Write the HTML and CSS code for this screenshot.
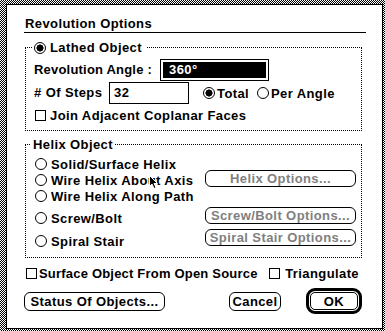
FILE: index.html
```html
<!DOCTYPE html>
<html lang="en">
<head>
    <meta charset="UTF-8">
    <title>Revolution Options</title>
    <link rel="stylesheet" href="styles.css">
</head>
<body>

    <div class="window">
        <h1 class="title">Revolution Options</h1>

        <fieldset class="group lathed">
            <legend><span class="legend-inner"><span class="radio on"></span>Lathed Object</span></legend>
            <div class="row angle-row">
                <span class="label angle-label">Revolution Angle :</span>
                <span class="field angle-field"><span class="selected">360°</span></span>
            </div>
            <div class="row steps-row">
                <span class="label steps-label"># Of Steps</span>
                <span class="field steps-field">32</span>
                <span class="option total"><span class="radio on"></span>Total</span>
                <span class="option per"><span class="radio"></span>Per Angle</span>
            </div>
            <div class="row check-row"><span class="check"></span>Join Adjacent Coplanar Faces</div>
        </fieldset>

        <fieldset class="group helix">
            <legend><span class="legend-inner">Helix Object</span></legend>
            <div class="helix-body">
                <div class="helix-list">
                    <div class="option"><span class="radio"></span>Solid/Surface Helix</div>
                    <div class="option"><span class="radio"></span>Wire Helix About Axis</div>
                    <div class="option"><span class="radio"></span>Wire Helix Along Path</div>
                    <div class="option screw-opt"><span class="radio"></span>Screw/Bolt</div>
                    <div class="option spiral-opt"><span class="radio"></span>Spiral Stair</div>
                </div>
                <div class="helix-buttons">
                    <span class="btn dim helix-btn">Helix Options...</span>
                    <span class="btn dim screw-btn">Screw/Bolt Options...</span>
                    <span class="btn dim spiral-btn">Spiral Stair Options...</span>
                </div>
            </div>
        </fieldset>

        <div class="row surface-row">
            <span class="check surface-check"></span>Surface Object From Open Source
            <span class="tri"><span class="check tri-check"></span>Triangulate</span>
        </div>

        <div class="row button-row">
            <span class="btn status">Status Of Objects...</span>
            <span class="btn cancel">Cancel</span>
            <span class="default"><span class="btn">OK</span></span>
        </div>

        <!-- mouse pointer over the dialog -->
        <svg class="cursor" width="11" height="16" viewBox="0 0 11 16">
            <path d="M1.5 1.5 L1.5 12.5 L4 10 L6 14.5 L8 13.5 L6 9.5 L9.5 9.5 Z" fill="#000" stroke="#fff" stroke-width="1"/>
        </svg>
    </div>

</body>
</html>
```

FILE: styles.css
```css
body {
    margin: 0;
    padding: 4px 0 0 6px;
    height: 331px;
    box-sizing: border-box;
    overflow: hidden;
    background: repeating-conic-gradient(#000 0 25%, #fff 0 50%) 0 0 / 2px 2px;
    font-family: "Liberation Sans", Arial, sans-serif;
    font-weight: bold;
    font-size: 13px;
    letter-spacing: 0.4px;
    color: #000;
}
.window {
    position: relative;
    box-sizing: border-box;
    width: 377px;
    height: 325px;
    border: 1px solid #000;
    background: #fff;
    padding: 11px 16px 0 17px;
}
.title {
    margin: 0;
    padding-left: 1px;
    font-size: 13px;
    line-height: 16px;
    border-bottom: 1px solid #000;
}
.group {
    margin: 6px 4px 0 1px;
    padding: 3px 5px 7px 8px;
    border: 1px dotted #000;
    min-width: 0;
}
.helix {
    margin-top: 5px;
    padding-bottom: 8px;
}
.group legend {
    padding: 0 5px 0 2px;
    margin-left: -2px;
    line-height: 17px;
}
.helix legend {
    margin-left: -3px;
    padding: 0 2px;
}
.legend-inner {
    display: flex;
    align-items: center;
}
.row {
    display: flex;
    align-items: center;
}
.label {
    line-height: 16px;
}
.angle-label {
    width: 126px;
    letter-spacing: 0.2px;
}
.steps-label {
    width: 75px;
}
.field {
    box-sizing: border-box;
    display: flex;
    height: 22px;
    border: 1px solid #000;
    padding: 2px;
    line-height: 16px;
}
.angle-field {
    width: 109px;
}
.selected {
    flex: 1;
    background: #000;
    color: #fff;
    padding-left: 6px;
}
.steps-field {
    width: 80px;
    padding: 2px 4px;
}
.steps-row {
    margin-top: 1px;
}
.check-row {
    margin-top: 3px;
    height: 16px;
}
.option {
    display: flex;
    align-items: center;
    height: 16px;
}
.total {
    width: 54px;
    margin-left: 14px;
}
.total .radio, .per .radio {
    margin-right: 2px;
}
.radio {
    box-sizing: border-box;
    flex: none;
    width: 12px;
    height: 12px;
    border: 1px solid #000;
    border-radius: 50%;
    margin-right: 4px;
}
.radio.on {
    background: radial-gradient(circle, #000 0 3.3px, #fff 3.8px);
}
.helix-list .radio {
    margin-left: 1px;
}
.check {
    box-sizing: border-box;
    flex: none;
    width: 11px;
    height: 11px;
    border: 1px solid #000;
    margin: 0 4px 0 1px;
}
.helix-body {
    display: flex;
}
.helix-list {
    flex: 1;
}
.screw-opt {
    margin-top: 6px;
}
.spiral-opt {
    margin-top: 7px;
}
.helix-buttons {
    display: flex;
    flex-direction: column;
    width: 151px;
}
.btn {
    box-sizing: border-box;
    display: flex;
    align-items: center;
    justify-content: center;
    height: 17px;
    border: 1px solid #000;
    border-radius: 6px;
    background: #fff;
}
.dim {
    color: #808080;
}
.helix-btn {
    margin-top: 14px;
}
.screw-btn {
    margin-top: 20px;
}
.spiral-btn {
    margin-top: 5px;
}
.surface-row {
    margin-top: 7px;
    height: 16px;
    letter-spacing: 0.2px;
}
.surface-check {
    margin: 0 2px 0 2px;
}
.tri {
    display: flex;
    align-items: center;
    margin-left: auto;
    margin-right: 7px;
    letter-spacing: 0.4px;
}
.tri-check {
    margin: 0 5px 0 0;
}
.button-row {
    margin-top: 7px;
    height: 26px;
}
.status {
    width: 141px;
    height: 19px;
}
.cancel {
    width: 52px;
    height: 19px;
    margin-left: auto;
}
.default {
    box-sizing: border-box;
    display: flex;
    width: 56px;
    height: 26px;
    border: 3px solid #000;
    border-radius: 9px;
    padding: 1px;
    margin: 0 4px 0 25px;
}
.default .btn {
    flex: 1;
    height: auto;
    border-radius: 5px;
}
.cursor {
    position: absolute;
    left: 141px;
    top: 169px;
}
```
